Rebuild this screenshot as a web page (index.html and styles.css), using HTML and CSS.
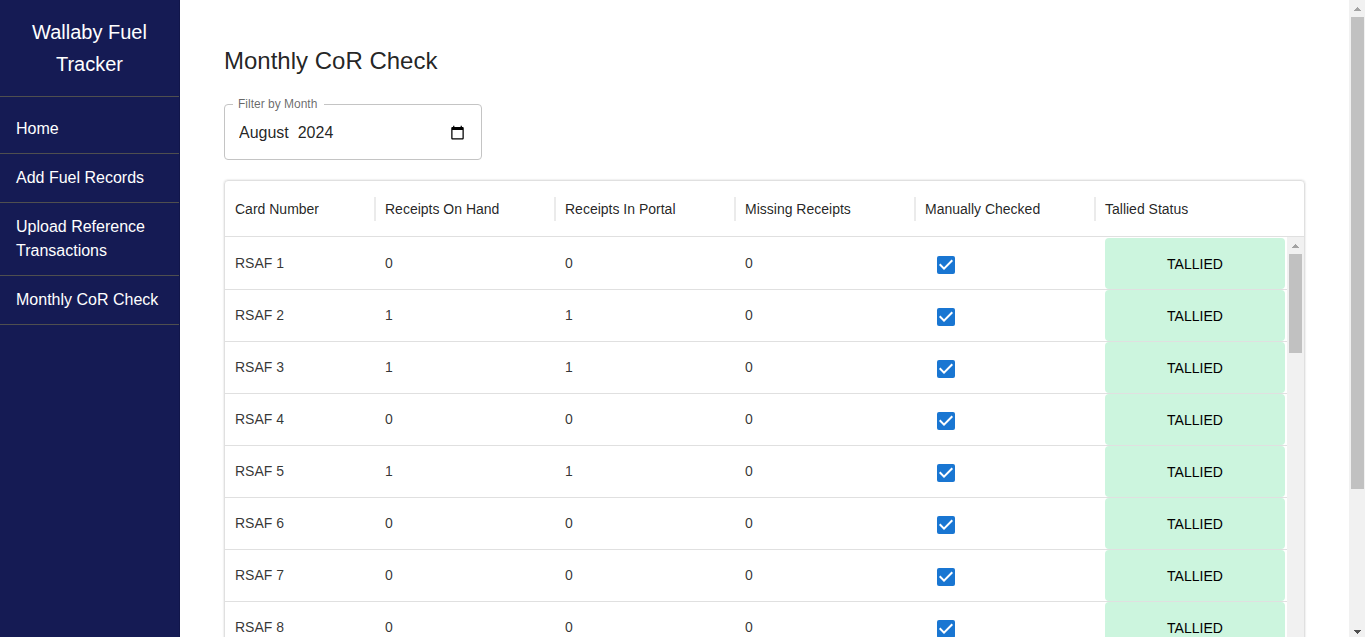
FILE: index.html
```html
<!DOCTYPE html>
<html lang="en">
<head>
<meta charset="utf-8">
<title>Wallaby Fuel Tracker</title>
<link rel="stylesheet" href="styles.css">
</head>
<body>
<aside class="sidebar">
  <div class="brand">Wallaby Fuel Tracker</div>
  <nav class="nav">
    <a class="nav-link" href="#home">Home</a>
    <a class="nav-link" href="#add">Add Fuel Records</a>
    <a class="nav-link" href="#upload">Upload Reference Transactions</a>
    <a class="nav-link" href="#check">Monthly CoR Check</a>
  </nav>
</aside>
<main class="main">
  <h1 class="title">Monthly CoR Check</h1>
  <div class="field">
    <label class="field-label" for="month">Filter by Month</label>
    <input class="field-input" id="month" type="text" value="August  2024">
    <button class="picker" type="button" aria-label="Show month picker">
      <svg class="picker-icon" viewBox="0 0 24 24"><path d="M20 3h-1V1h-2v2H7V1H5v2H4c-1.100 0-2 .9-2 2v16c0 1.100.9 2 2 2h16c1.100 0 2-.9 2-2V5c0-1.100-.9-2-2-2zm0 18H4V8h16v13z"/></svg>
    </button>
  </div>
  <div class="panel">
    <table class="records">
      <colgroup><col class="col-card"><col class="col-data"><col class="col-data"><col class="col-data"><col class="col-data"><col></colgroup>
      <thead>
        <tr><th>Card Number</th><th>Receipts On Hand</th><th>Receipts In Portal</th><th>Missing Receipts</th><th>Manually Checked</th><th>Tallied Status</th></tr>
      </thead>
      <tbody>
        <tr><td>RSAF 1</td><td>0</td><td>0</td><td>0</td><td class="check-cell"><input class="check" type="checkbox" aria-label="RSAF 1 checked" checked></td><td class="status-cell"><div class="status">TALLIED</div></td></tr>
        <tr><td>RSAF 2</td><td>1</td><td>1</td><td>0</td><td class="check-cell"><input class="check" type="checkbox" aria-label="RSAF 2 checked" checked></td><td class="status-cell"><div class="status">TALLIED</div></td></tr>
        <tr><td>RSAF 3</td><td>1</td><td>1</td><td>0</td><td class="check-cell"><input class="check" type="checkbox" aria-label="RSAF 3 checked" checked></td><td class="status-cell"><div class="status">TALLIED</div></td></tr>
        <tr><td>RSAF 4</td><td>0</td><td>0</td><td>0</td><td class="check-cell"><input class="check" type="checkbox" aria-label="RSAF 4 checked" checked></td><td class="status-cell"><div class="status">TALLIED</div></td></tr>
        <tr><td>RSAF 5</td><td>1</td><td>1</td><td>0</td><td class="check-cell"><input class="check" type="checkbox" aria-label="RSAF 5 checked" checked></td><td class="status-cell"><div class="status">TALLIED</div></td></tr>
        <tr><td>RSAF 6</td><td>0</td><td>0</td><td>0</td><td class="check-cell"><input class="check" type="checkbox" aria-label="RSAF 6 checked" checked></td><td class="status-cell"><div class="status">TALLIED</div></td></tr>
        <tr><td>RSAF 7</td><td>0</td><td>0</td><td>0</td><td class="check-cell"><input class="check" type="checkbox" aria-label="RSAF 7 checked" checked></td><td class="status-cell"><div class="status">TALLIED</div></td></tr>
        <tr><td>RSAF 8</td><td>0</td><td>0</td><td>0</td><td class="check-cell"><input class="check" type="checkbox" aria-label="RSAF 8 checked" checked></td><td class="status-cell"><div class="status">TALLIED</div></td></tr>
      </tbody>
    </table>
    <div class="scrollbar panel-scrollbar" aria-hidden="true">
      <svg class="arrow" viewBox="0 0 17 17" shape-rendering="crispEdges"><path fill="#a3a3a3" d="M8 7h1v1h1v1h1v1h1v1H5v-1h1V9h1V8h1z"/></svg>
      <div class="thumb panel-thumb"></div>
    </div>
  </div>
</main>
<div class="scrollbar page-scrollbar" aria-hidden="true">
  <svg class="arrow" viewBox="0 0 17 17" shape-rendering="crispEdges"><path fill="#a3a3a3" d="M8 7h1v1h1v1h1v1h1v1H5v-1h1V9h1V8h1z"/></svg>
  <div class="track"><div class="thumb page-thumb"></div></div>
  <svg class="arrow" viewBox="0 0 17 17" shape-rendering="crispEdges"><path fill="#505050" d="M5 10h7v1h-1v1h-1v1H9v1H8v-1H7v-1H6v-1H5z"/></svg>
</div>
</body>
</html>
```
FILE: styles.css
```css
* { box-sizing: border-box; }

body {
  margin: 0;
  height: 100vh;
  display: flex;
  overflow: hidden;
  background: #fff;
  color: rgba(0, 0, 0, 0.87);
  font: 16px/24px "Liberation Sans", Arial, sans-serif;
}

.sidebar {
  flex: 0 0 180px;
  background: #151b54;
  border-right: 1px solid #11164a;
  color: #fff;
}

.brand {
  padding: 16px;
  border-bottom: 1px solid #4f4f4f;
  font-size: 20px;
  line-height: 32px;
  text-align: center;
}

.nav { padding-top: 8px; }

.nav-link {
  display: block;
  padding: 12px 16px;
  border-bottom: 1px solid #4f4f4f;
  color: #fff;
  text-decoration: none;
}

.main {
  flex: 1;
  min-width: 0;
  padding: 45px 44px 0;
  overflow: hidden;
}

.title {
  margin: 0 0 27px;
  font-size: 24px;
  line-height: 32px;
  font-weight: 400;
}

.field {
  position: relative;
  display: flex;
  align-items: center;
  width: 258px;
  height: 56px;
  margin-bottom: 20px;
  padding: 0 16px 0 14px;
  border: 1px solid #c4c4c4;
  border-radius: 4px;
}

.field-label {
  position: absolute;
  top: -9px;
  left: 8px;
  padding: 0 7px 0 5px;
  background: #fff;
  color: rgba(0, 0, 0, 0.6);
  font-size: 12px;
  line-height: 16px;
}

.field-input {
  flex: 1;
  min-width: 0;
  padding: 2px 0 0;
  border: 0;
  background: none;
  color: inherit;
  font: inherit;
}

.picker {
  flex: none;
  padding: 0;
  border: 0;
  background: none;
}

.picker-icon {
  display: block;
  width: 15px;
  height: 15px;
}

.panel {
  position: relative;
  overflow: hidden;
  border: 1px solid #e0e0e0;
  border-radius: 4px;
  box-shadow: 0 0 2px rgba(0, 0, 0, 0.2);
}

.records {
  width: 100%;
  table-layout: fixed;
  border-collapse: separate;
  border-spacing: 0;
  font-size: 14px;
  line-height: 20px;
}

.col-card { width: 150px; }
.col-data { width: 180px; }

.records th {
  height: 56px;
  padding: 0 10px;
  border-bottom: 1px solid #e0e0e0;
  background:
    linear-gradient(#ebebeb, #ebebeb) left center / 1px 24px no-repeat,
    linear-gradient(#ebebeb, #ebebeb) right center / 1px 24px no-repeat;
  font-weight: 400;
  text-align: left;
}

.records th:first-child { background-size: 0 0, 1px 24px; }
.records th:last-child { background-size: 1px 24px, 0 0; }

.records td {
  height: 52px;
  padding: 0 10px 2px;
  border-bottom: 1px solid #e0e0e0;
  color: rgba(0, 0, 0, 0.8);
}

.records tbody tr:first-child td { padding-top: 1px; height: 53px; }

.records .check-cell { padding-left: 22px; }

.check {
  appearance: none;
  display: block;
  width: 18px;
  height: 18px;
  margin: 4px 0 0;
  border-radius: 2px;
  background: #1976d2 url("data:image/svg+xml,%3Csvg xmlns='http://www.w3.org/2000/svg' viewBox='3 3 18 18'%3E%3Cpath fill='white' d='M10 17l-5-5 1.41-1.41L10 14.17l7.59-7.59L19 8l-9 9z'/%3E%3C/svg%3E") center / 18px 18px;
}

.records .status-cell {
  padding-right: 19px;
  padding-bottom: 0;
}

.status {
  height: 51px;
  border-radius: 4px;
  background: #ccf5de;
  color: #000;
  line-height: 53px;
  text-align: center;
}

.scrollbar {
  display: flex;
  flex-direction: column;
  background: #f1f1f1;
}

.arrow {
  flex: none;
  width: 17px;
  height: 17px;
}

.track { flex: 1; }

.thumb {
  width: 13px;
  margin-left: 2px;
  background: #c1c1c1;
}

.panel-scrollbar {
  position: absolute;
  top: 56px;
  right: 0;
  bottom: 0;
  width: 17px;
}

.panel-thumb { height: 99px; }

.page-scrollbar {
  flex: 0 0 16px;
  overflow: hidden;
}

.page-thumb { height: 78.3%; }
```
